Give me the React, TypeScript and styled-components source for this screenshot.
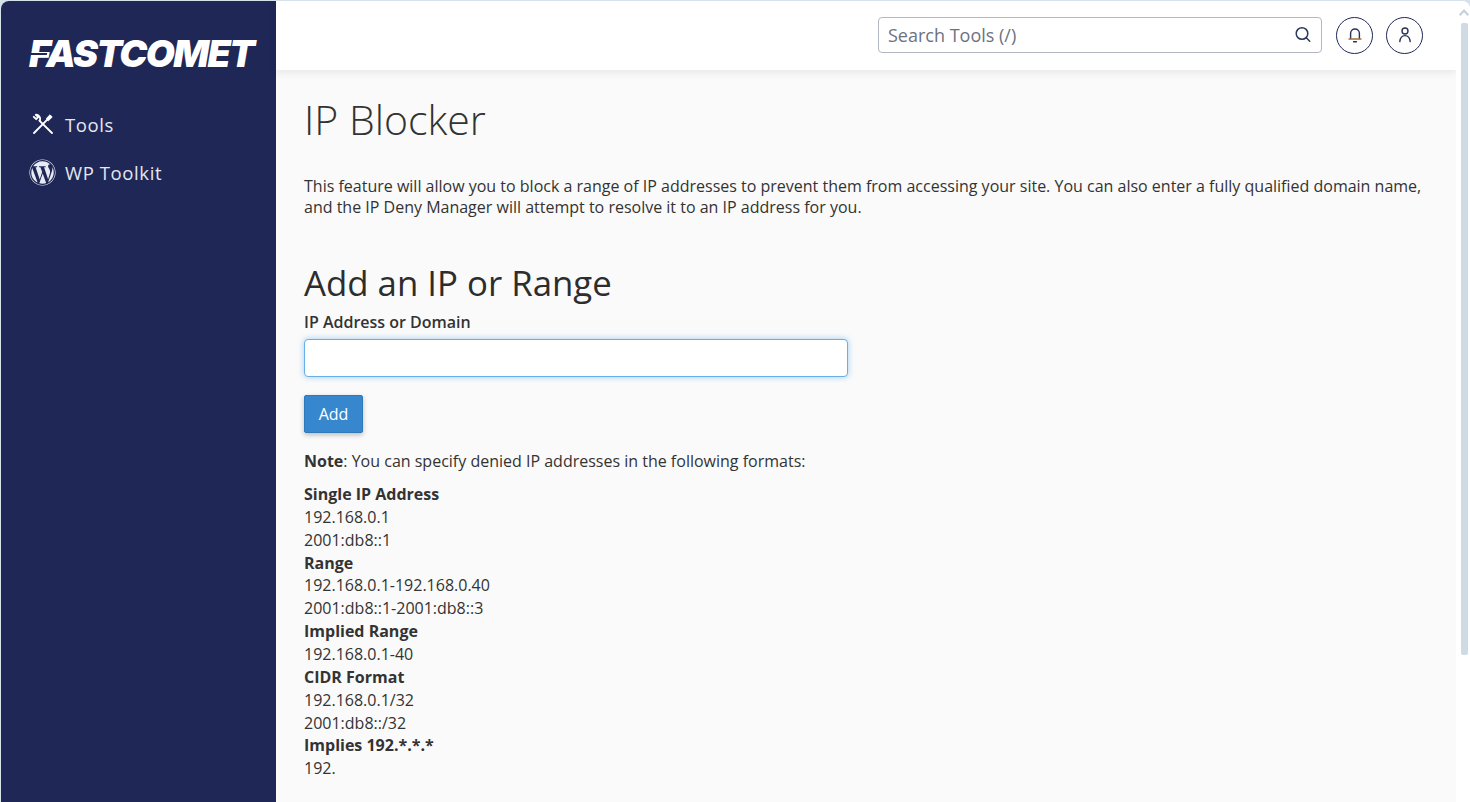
import styled, { createGlobalStyle } from 'styled-components'
import { FaWordpress } from 'react-icons/fa'

const GlobalStyle = createGlobalStyle`
  html, body {
    margin: 0;
    height: 100%;
    overflow: hidden;
    background: #d6e2ea;
  }
  body {
    font-family: "Open Sans", "Liberation Sans", sans-serif;
    font-size: 16px;
    color: #333;
  }
  #root { height: 100%; }
`

const Shell = styled.div`
  display: flex;
  height: 801px;
  margin: 1px 0 0 1px;
  background: #fff;
  border-radius: 8px 8px 0 0;
  overflow: hidden;
`

const SideBar = styled.aside`
  width: 275px;
  flex: none;
  background: #1f2756;
  color: #e4e8f2;
`

const Logo = styled.div`
  position: relative;
  margin: 30px 0 23px 28px;
  height: 46px;
  font-family: Inter, "Liberation Sans", sans-serif;
  font-weight: 900;
  font-style: italic;
  font-size: 37.5px;
  line-height: 46px;
  letter-spacing: -1.6px;
  color: #fff;
  white-space: nowrap;

  /* the cut through the F */
  &::after {
    content: "";
    position: absolute;
    left: 0;
    top: 22px;
    width: 18px;
    height: 2px;
    background: #1f2756;
    transform: skewX(-12deg);
  }
`

const NavItem = styled.a`
  display: flex;
  align-items: center;
  gap: 9px;
  height: 48px;
  padding-left: 28px;
  font-size: 18.5px;
  letter-spacing: 0.6px;
  font-weight: 500;
`

const NavIcon = styled.span`
  width: 27px;
  height: 27px;
  display: flex;
  align-items: center;
  justify-content: center;
`

const Main = styled.div`
  flex: 1;
  min-width: 0;
  display: flex;
  flex-direction: column;
  background: #fafafa;
`

const TopBar = styled.header`
  flex: none;
  box-sizing: border-box;
  height: 69px;
  display: flex;
  align-items: center;
  justify-content: flex-end;
  gap: 13px;
  padding: 0 33px 1px 0;
  background: #fff;
  box-shadow: 0 2px 8px rgba(30, 40, 60, 0.1);
`

const SearchBox = styled.div`
  box-sizing: border-box;
  width: 444px;
  height: 36px;
  display: flex;
  align-items: center;
  justify-content: space-between;
  padding: 0 9px;
  margin-right: 1px;
  border: 1px solid #b3b7c4;
  border-radius: 4px;
  font-size: 18px;
  color: #6c7280;
`

const RoundButton = styled.button`
  box-sizing: border-box;
  width: 37px;
  height: 37px;
  padding: 0;
  display: flex;
  align-items: center;
  justify-content: center;
  background: #fff;
  border: 1px solid #1f2756;
  border-radius: 50%;
`

const Content = styled.main`
  flex: 1;
  padding: 0 28px;
  overflow: hidden;
`

const PageTitle = styled.h1`
  margin: 19px 0 0;
  font-size: 41px;
  line-height: 60px;
  font-weight: 300;
  color: #333;
`

const Intro = styled.p`
  margin: 27px 0 0;
  line-height: 21px;
`

const SectionTitle = styled.h2`
  margin: 41px 0 0;
  font-size: 34.8px;
  line-height: 48px;
  font-weight: 400;
  color: #2d2d2d;
`

const FieldLabel = styled.label`
  display: block;
  margin-top: 4px;
  line-height: 23px;
  font-weight: 600;
`

const TextInput = styled.input`
  display: block;
  box-sizing: border-box;
  width: 544px;
  height: 38px;
  margin-top: 5px;
  background: #fff;
  border: 1px solid #66afe9;
  border-radius: 4px;
  outline: none;
  box-shadow: 0 0 6px rgba(102, 175, 233, 0.6);
`

const AddButton = styled.button`
  display: block;
  width: 59px;
  height: 38px;
  margin-top: 18px;
  padding: 0;
  font: inherit;
  color: #fff;
  background: #3787cf;
  border: 1px solid #2f78b9;
  border-radius: 2px;
  box-shadow: 0 2px 5px rgba(0, 0, 0, 0.25);
`

const Note = styled.p`
  margin: 17px 0 10px;
  line-height: 23px;
`

const Formats = styled.div`
  line-height: 22.86px;
`

const FormatName = styled.div`
  font-weight: 700;
`

const Rail = styled.div`
  flex: none;
  width: 14px;
  display: flex;
  flex-direction: column;
  align-items: center;
  background: #fff;
`

const RailArrow = styled.div`
  height: 22px;
  display: flex;
  align-items: center;
  color: #c3ced8;
  margin-left: 2px;
`

const RailThumb = styled.div`
  width: 7px;
  height: 632px;
  margin-left: 2px;
  background: #cfdae4;
  border-radius: 2px;
`

const formats: { name: string; values: string[] }[] = [
  { name: 'Single IP Address', values: ['192.168.0.1', '2001:db8::1'] },
  { name: 'Range', values: ['192.168.0.1-192.168.0.40', '2001:db8::1-2001:db8::3'] },
  { name: 'Implied Range', values: ['192.168.0.1-40'] },
  { name: 'CIDR Format', values: ['192.168.0.1/32', '2001:db8::/32'] },
  { name: 'Implies 192.*.*.*', values: ['192.'] },
]

function ToolsIcon() {
  return (
    <svg width="22" height="22" viewBox="0 0 22 22" fill="none" stroke="#fff" strokeWidth="1.9" strokeLinecap="round" strokeLinejoin="round">
      <path d="M7.4 7.6 20 20" />
      <path d="M1.8 3.8 4.2 6.2l2-2L3.8 1.8A4.2 4.2 0 0 1 8 7.4" />
      <path d="M2 20 14.8 7.2" />
      <path d="M15 7l-.6-1.6L18 1.8l2.2 2.2L16.6 7.6z" fill="#fff" strokeWidth="1" />
    </svg>
  )
}

function SearchIcon() {
  return (
    <svg width="18" height="18" viewBox="0 0 18 18" fill="none" stroke="#2b3a55" strokeWidth="1.5" strokeLinecap="round">
      <circle cx="8" cy="7.5" r="5.8" />
      <path d="m12.3 11.8 3.4 3.4" />
    </svg>
  )
}

function BellIcon() {
  return (
    <svg width="16" height="18" viewBox="0 0 16 18" fill="none" stroke="#2b3158" strokeWidth="1.4" strokeLinecap="round" strokeLinejoin="round">
      <path d="M3.6 12.6V7.4a4.4 4.4 0 0 1 8.8 0v5.2" />
      <path d="M2 13h12" stroke="#a0703a" />
      <path d="M6.6 15.8h2.8" />
    </svg>
  )
}

function UserIcon() {
  return (
    <svg width="16" height="18" viewBox="0 0 16 18" fill="none" stroke="#2b3158" strokeWidth="1.4" strokeLinecap="round">
      <circle cx="8" cy="5" r="3" />
      <path d="M2.8 15.6c.4-3.6 2.4-6 5.2-6s4.8 2.4 5.2 6" />
    </svg>
  )
}

export default function App() {
  return (
    <>
      <GlobalStyle />
      <Shell>
        <SideBar>
          <Logo>FASTCOMET</Logo>
          <NavItem><NavIcon><ToolsIcon /></NavIcon>Tools</NavItem>
          <NavItem><NavIcon><FaWordpress size={27} color="#e8ebf3" /></NavIcon>WP Toolkit</NavItem>
        </SideBar>
        <Main>
          <TopBar>
            <SearchBox>Search Tools (/)<SearchIcon /></SearchBox>
            <RoundButton aria-label="Notifications"><BellIcon /></RoundButton>
            <RoundButton aria-label="Account"><UserIcon /></RoundButton>
          </TopBar>
          <Content>
            <PageTitle>IP Blocker</PageTitle>
            <Intro>
              This feature will allow you to block a range of IP addresses to prevent them from accessing your site. You can also enter a fully qualified domain name, and the IP Deny Manager will attempt to resolve it to an IP address for you.
            </Intro>
            <SectionTitle>Add an IP or Range</SectionTitle>
            <FieldLabel htmlFor="ip">IP Address or Domain</FieldLabel>
            <TextInput id="ip" />
            <AddButton>Add</AddButton>
            <Note><b>Note</b>: You can specify denied IP addresses in the following formats:</Note>
            <Formats>
              {formats.map((f) => (
                <div key={f.name}>
                  <FormatName>{f.name}</FormatName>
                  {f.values.map((v) => <div key={v}>{v}</div>)}
                </div>
              ))}
            </Formats>
          </Content>
        </Main>
        <Rail>
          <RailArrow>
            <svg width="10" height="7" viewBox="0 0 10 7" fill="currentColor"><path d="M5 0 10 5.5 8.6 7 5 3 1.4 7 0 5.5z" /></svg>
          </RailArrow>
          <RailThumb />
        </Rail>
      </Shell>
    </>
  )
}
